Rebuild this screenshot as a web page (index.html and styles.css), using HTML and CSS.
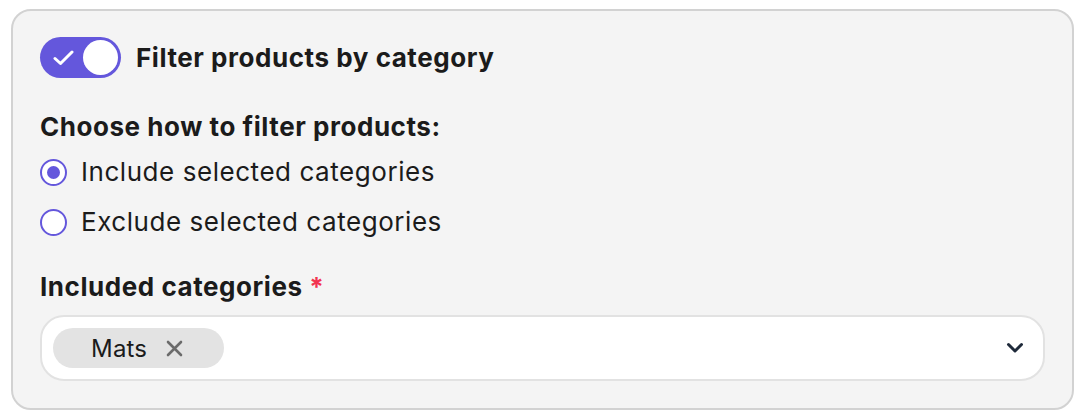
FILE: index.html
```html
<!DOCTYPE html>
<html lang="en">
<head>
<meta charset="utf-8">
<title>Filter products by category</title>
<link rel="stylesheet" href="styles.css">
</head>
<body>
<section class="card">
  <div class="toggle-row">
    <span class="toggle" role="switch" aria-checked="true">
      <svg class="toggle-check" width="21" height="16" viewBox="0 0 21 16" aria-hidden="true">
        <polyline points="2,8.5 7.5,13.5 19,2" fill="none" stroke="#fff" stroke-width="3" stroke-linecap="round" stroke-linejoin="round"/>
      </svg>
      <span class="toggle-knob"></span>
    </span>
    <span class="toggle-label">Filter products by category</span>
  </div>

  <h3 class="heading">Choose how to filter products:</h3>
  <div class="radio-group">
    <label class="radio-row"><span class="radio checked"></span><span>Include selected categories</span></label>
    <label class="radio-row"><span class="radio"></span><span>Exclude selected categories</span></label>
  </div>

  <h3 class="heading field-label">Included categories <span class="req">*</span></h3>
  <div class="select">
    <span class="chip">
      <span class="chip-text">Mats</span>
      <svg class="chip-x" width="17" height="17" viewBox="0 0 17 17" aria-hidden="true">
        <path d="M2 2 L15 15 M15 2 L2 15" stroke="#6b6b6b" stroke-width="2.6" stroke-linecap="round"/>
      </svg>
    </span>
    <svg class="chevron" width="18" height="12" viewBox="0 0 18 12" aria-hidden="true">
      <polyline points="2.5,2.5 9,9 15.5,2.5" fill="none" stroke="#1f2a3a" stroke-width="3" stroke-linecap="round" stroke-linejoin="round"/>
    </svg>
  </div>
</section>
</body>
</html>
```

FILE: styles.css
```css
* { box-sizing: border-box; }

html, body {
  margin: 0;
  background: #ffffff;
}

body {
  padding: 9px 12px 0 11px;
  font-family: Inter, "Noto Sans", "Liberation Sans", sans-serif;
  color: #1b1b1b;
  letter-spacing: 0.55px;
}

.card {
  background: #f4f4f4;
  border: 2px solid #d2d2d2;
  border-radius: 20px;
  padding: 26px 27px 27px 27px;
}

.toggle-row {
  display: flex;
  align-items: center;
  gap: 15px;
  height: 41px;
}

.toggle {
  position: relative;
  display: flex;
  align-items: center;
  width: 81px;
  height: 41px;
  border-radius: 21px;
  background: #6457dc;
  flex: none;
}

.toggle-check {
  margin-left: 13px;
}

.toggle-knob {
  position: absolute;
  top: 3px;
  right: 3px;
  width: 35px;
  height: 35px;
  border-radius: 50%;
  background: #ffffff;
}

.toggle-label {
  font-size: 26px;
  font-weight: 700;
  line-height: 30px;
}

.heading {
  margin: 34px 0 0 0;
  font-size: 26px;
  font-weight: 700;
  line-height: 30px;
}

.radio-group {
  display: flex;
  flex-direction: column;
  gap: 20px;
  margin-top: 15px;
}

.radio-row {
  display: flex;
  align-items: center;
  gap: 14px;
  font-size: 26px;
  line-height: 30px;
}

.radio {
  width: 27px;
  height: 27px;
  border-radius: 50%;
  border: 2px solid #6457dc;
  background: #ffffff;
  display: flex;
  align-items: center;
  justify-content: center;
  flex: none;
}

.radio.checked::after {
  content: "";
  width: 13px;
  height: 13px;
  border-radius: 50%;
  background: #6457dc;
}

.field-label {
  margin-top: 35px;
}

.req {
  color: #f2334f;
}

.select {
  margin-top: 13px;
  display: flex;
  align-items: center;
  justify-content: space-between;
  height: 66px;
  padding: 0 19px 0 11px;
  background: #ffffff;
  border: 2px solid #e2e2e2;
  border-radius: 24px;
}

.chip {
  display: flex;
  align-items: center;
  gap: 19px;
  height: 40px;
  padding: 0 41px 0 38px;
  border-radius: 20px;
  background: #e3e3e3;
  font-size: 24px;
  letter-spacing: 0.2px;
  color: #1b1b1b;
}

.chevron {
  flex: none;
}
```
